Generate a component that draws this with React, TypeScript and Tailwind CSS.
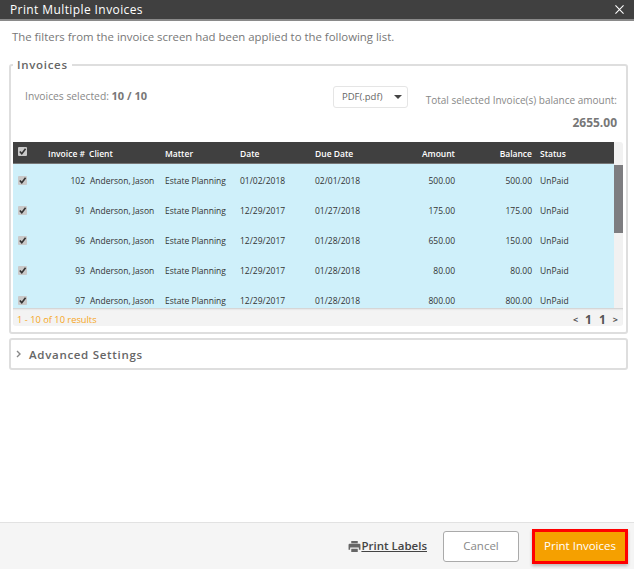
import React from "react";

const rows = [
  { id: 102, date: "01/02/2018", due: "02/01/2018", amount: "500.00", balance: "500.00" },
  { id: 91, date: "12/29/2017", due: "01/27/2018", amount: "175.00", balance: "175.00" },
  { id: 96, date: "12/29/2017", due: "01/28/2018", amount: "650.00", balance: "150.00" },
  { id: 93, date: "12/29/2017", due: "01/28/2018", amount: "80.00", balance: "80.00" },
  { id: 97, date: "12/29/2017", due: "01/28/2018", amount: "800.00", balance: "800.00" },
];

const gridCols = "grid grid-cols-[72px_80px_75px_75px_75px_65px_77px_1fr] items-center";

const Check = () => (
  <span className="mb-[2px] flex h-[9px] w-[9px] items-center justify-center rounded-[1px] bg-[#c9c9c9]">
    <svg viewBox="0 0 10 10" className="h-[9px] w-[9px]" fill="none" stroke="#333" strokeWidth={1.8}>
      <path d="M2 5l2.2 2.4L8.4 2" />
    </svg>
  </span>
);

const App = () => {
  return (
    <div className="flex h-[569px] w-[634px] flex-col bg-white font-['Open_Sans','Noto_Sans',sans-serif] text-[#666]">
      <div className="flex h-[21px] items-center justify-between border-b-2 border-[#8a8a8a] bg-[#404040] pl-[10px] pr-[10px] text-white">
        <span className="text-[12px] tracking-[0.4px]">Print Multiple Invoices</span>
        <svg viewBox="0 0 10 10" className="h-[9px] w-[9px]" fill="none" stroke="#fff" strokeWidth={1.2}>
          <path d="M0.5 0.5l9 9M9.5 0.5l-9 9" />
        </svg>
      </div>

      <div className="flex-1 pl-[9px] pr-[6px]">
        <p className="mt-[8px] pl-[3px] text-[11.4px] leading-[16px] text-[#777]">
          The filters from the invoice screen had been applied to the following list.
        </p>

        <fieldset className="mt-[11px] h-[278px] min-w-0 rounded-[3px] border-2 border-[#dedede] px-[2px]">
          <legend className="ml-0 px-[4px] pt-[1px] text-[11.5px] font-semibold leading-[16px] tracking-[0.7px] text-[#666]">
            Invoices
          </legend>

          <div className="flex h-[69px] items-start">
            <div className="mt-[15px] w-[320px] pl-[12px] text-[10.3px] leading-[16px] text-[#888]">
              Invoices selected: <b className="text-[11px] font-bold text-[#777]">10 / 10</b>
            </div>
            <div className="mt-[13px] flex h-[22px] w-[75px] items-center justify-between rounded-[3px] border border-[#e5e5e5] pl-[8px] pr-[5px] text-[9.5px] text-[#666]">
              <span>PDF(.pdf)</span>
              <span className="h-0 w-0 border-x-[4px] border-t-[4px] border-x-transparent border-t-[#444]" />
            </div>
            <div className="flex flex-1 flex-col items-end pr-[7px]">
              <span className="mt-[19px] whitespace-nowrap text-[10px] leading-[16px] text-[#888]">
                Total selected Invoice(s) balance amount:
              </span>
              <span className="mt-[7px] text-[12px] font-bold leading-[16px] text-[#777]">2655.00</span>
            </div>
          </div>

          <div className="relative">
            <div className="flex">
              <div className="w-[601px]">
                <div className={`${gridCols} h-[22px] border-b border-[#777] bg-[#404040] text-[8.5px] font-semibold text-white`}>
                  <div className="flex items-center justify-between pl-[5px]">
                    <Check />
                    <span className="whitespace-nowrap pt-[3px]">Invoice #</span>
                  </div>
                  <div className="pl-[4px] pt-[3px]">Client</div>
                  <div className="pt-[3px]">Matter</div>
                  <div className="pt-[3px]">Date</div>
                  <div className="pt-[3px]">Due Date</div>
                  <div className="pt-[3px] text-right">Amount</div>
                  <div className="pt-[3px] text-right">Balance</div>
                  <div className="pl-[8px] pt-[3px]">Status</div>
                </div>
                <div className="h-[144px] overflow-hidden bg-[#cff0fa] text-[8.5px] text-[#333]">
                  {rows.map((r) => (
                    <div key={r.id} className={`${gridCols} h-[30px] pt-[4px]`}>
                      <div className="flex items-center justify-between pl-[5px]">
                        <Check />
                        <span>{r.id}</span>
                      </div>
                      <div className="whitespace-nowrap pl-[5px]">Anderson, Jason</div>
                      <div className="whitespace-nowrap">Estate Planning</div>
                      <div>{r.date}</div>
                      <div>{r.due}</div>
                      <div className="text-right">{r.amount}</div>
                      <div className="text-right">{r.balance}</div>
                      <div className="pl-[8px]">UnPaid</div>
                    </div>
                  ))}
                </div>
              </div>
              <div className="w-[9px] rounded-tr-[3px] bg-[#f1f1f1] pt-[23px]">
                <div className="h-[68px] bg-[#7d7d80]" />
              </div>
            </div>
            <div className="flex h-[18px] w-[610px] items-center justify-between rounded-b-[3px] bg-[#f3f3f3] pl-[4px] pr-[5px] pt-[5px] shadow-[inset_0_2px_2px_-1px_#ccc]">
              <span className="text-[9.3px] leading-[12px] text-[#f6a623]">1 - 10 of 10 results</span>
              <span className="flex items-center gap-[7px] text-[12px] font-bold leading-[12px] text-[#555]">
                <span className="text-[9px]">&lt;</span>
                <span>1</span>
                <span>1</span>
                <span className="text-[9px]">&gt;</span>
              </span>
            </div>
          </div>
        </fieldset>

        <div className="mt-[4px] flex h-[32px] items-center rounded-[3px] border-2 border-[#dedede] pl-[5px]">
          <svg viewBox="0 0 6 8" className="h-[8px] w-[6px]" fill="none" stroke="#888" strokeWidth={1.4}>
            <path d="M1 1l3 3-3 3" />
          </svg>
          <span className="ml-[7px] pt-[1px] text-[11.5px] font-semibold tracking-[0.7px] text-[#666]">Advanced Settings</span>
        </div>
      </div>

      <div className="flex h-[47px] items-center justify-end border-t border-[#e2e2e2] bg-[#f5f5f5] pr-[6px]">
        <svg viewBox="0 0 12 12" className="h-[13px] w-[13px]" fill="#666">
          <path d="M3 1h6v2H3zM1.5 3.5h9a1 1 0 011 1V9H10V7H2v2H.5V4.5a1 1 0 011-1zM3 8h6v3H3z" />
        </svg>
        <span className="text-[11.5px] font-semibold text-[#444] underline">Print Labels</span>
        <button className="ml-[16px] h-[31px] w-[76px] rounded-[3px] border border-[#aaa] bg-white text-[11.5px] text-[#888]">
          Cancel
        </button>
        <button className="ml-[13px] h-[35px] w-[96px] border-[3px] border-[#f00] bg-[#f5a000] text-[11.5px] text-white shadow-[0_2px_3px_#bbb]">
          Print Invoices
        </button>
      </div>
    </div>
  );
};

export default App;
